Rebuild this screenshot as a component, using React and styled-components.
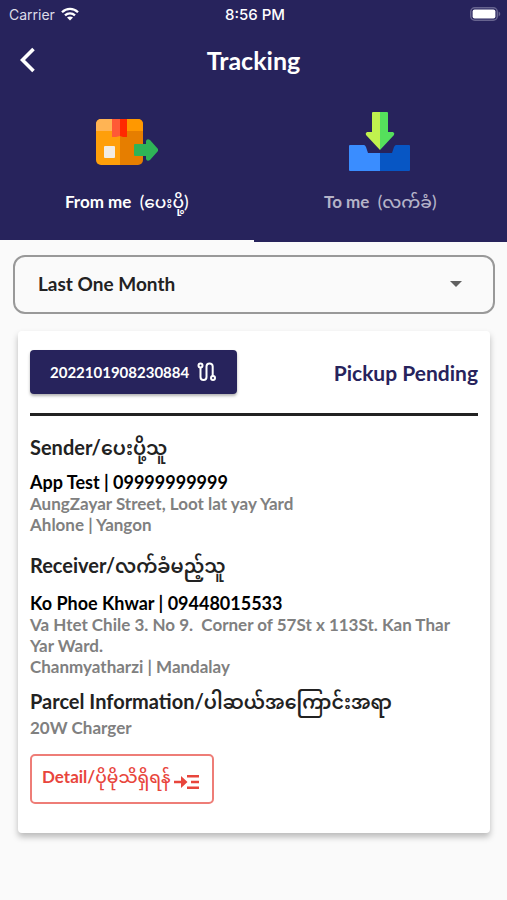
import React, { useState } from 'react'
import styled, { createGlobalStyle } from 'styled-components'

const navy = '#27235c'
const red = '#e8453c'

const GlobalStyle = createGlobalStyle`
    *{
        box-sizing:border-box;
    }
    body{
        margin:0;
        background:#fafafa;
        color:#222;
        font-family:Lato, "Noto Sans Myanmar", "Noto Sans", sans-serif;
    }
    button, select{
        font-family:inherit;
    }
`

const WifiIcon = () => (
    <svg width="18" height="14" viewBox="0 0 18 14" fill="none" stroke="#fff" strokeWidth="2.3">
        <path d="M1 5.2C5.6 0.7 12.4 0.7 17 5.2" />
        <path d="M4 8.4C6.9 5.6 11.1 5.6 14 8.4" />
        <path d="M9 13.6L6 10.6C7.7 9 10.3 9 12 10.6Z" fill="#fff" stroke="none" />
    </svg>
)

const BatteryIcon = () => (
    <svg width="31" height="14" viewBox="0 0 31 14">
        <rect x="0.75" y="0.75" width="26.5" height="12.5" rx="4" fill="none" stroke="#67648f" strokeWidth="1.5" />
        <rect x="2.6" y="2.6" width="22.8" height="8.8" rx="2" fill="#fff" />
        <path d="M28.6 4.6C30.8 5.4 30.8 8.6 28.6 9.4Z" fill="#67648f" />
    </svg>
)

const BackIcon = () => (
    <svg width="16" height="26" viewBox="0 0 16 26" fill="none" stroke="#fff" strokeWidth="3.6">
        <path d="M13.5 2L2.5 13L13.5 24" />
    </svg>
)

const ParcelOutIcon = () => (
    <svg width="62" height="64" viewBox="0 0 62 64">
        <path d="M5 7h19v46H5a5 5 0 0 1-5-5V12a5 5 0 0 1 5-5z" fill="#ff9f0a" />
        <path d="M24 7h18a5 5 0 0 1 5 5v36a5 5 0 0 1-5 5H24z" fill="#e67e00" />
        <path d="M5 7h11v12H0v-7a5 5 0 0 1 5-5z" fill="#ffb454" />
        <path d="M31 7h11a5 5 0 0 1 5 5v7H31z" fill="#ff9800" />
        <path d="M16 7h8v17l-4 1h-4z" fill="#ff5a36" />
        <path d="M24 7h7v18h-4l-3-1z" fill="#ff2a00" />
        <rect x="8" y="34" width="11" height="12" rx="1" fill="#f2ece3" />
        <path d="M39 32h11v-3q1-3 4-1l8 9q1 1 0 2l-8 9q-3 2-4-1v-3H39q-1 0-1-1V33q0-1 1-1z" fill="#2fb457" />
    </svg>
)

const InboxIcon = () => (
    <svg width="62" height="64" viewBox="1 0 62 64">
        <path d="M2 33h14q1 0 2 2l2 6h12v18H2q-1 0-1-1V34q0-1 1-1z" fill="#3a8dff" />
        <path d="M32 41h12l2-6q1-2 2-2h13q1 0 1 1v24q0 1-1 1H32z" fill="#0756c4" />
        <path d="M32 0h-7q-1 0-1 1v19h-5q-2 1-1 3l14 15z" fill="#c0f24e" />
        <path d="M32 0h7q1 0 1 1v19h5q2 1 1 3L32 38z" fill="#55e05c" />
    </svg>
)

const RouteIcon = () => (
    <svg width="20" height="20" viewBox="0 0 20 20" fill="none" stroke="#fff" strokeWidth="2">
        <circle cx="3.5" cy="3.5" r="2" />
        <path d="M3.5 5.5V15a3 3 0 0 0 6 0V4.5a3.1 3.1 0 0 1 6.2 0V14" />
        <circle cx="16" cy="16" r="2" />
    </svg>
)

const ReadMoreIcon = () => (
    <ReadMoreSvg width="26" height="16" viewBox="0 0 26 16" fill={red}>
        <path d="M0 6.8h7V2L13.5 8L7 14V9.2H0z" />
        <path d="M13 1h12v2.5H13zM17 6.8h8v2.4h-8zM13 12.5h12V15H13z" />
    </ReadMoreSvg>
)

const Track = () => {
    const [tab, setTab] = useState('from')
    return(
        <div>
            <GlobalStyle />
            <Header>
                <StatusBar>
                    <Carrier>Carrier <WifiIcon /></Carrier>
                    <Clock>8:56 PM</Clock>
                    <Battery><BatteryIcon /></Battery>
                </StatusBar>
                <TitleBar>
                    <BackButton type="button" aria-label="Back"><BackIcon /></BackButton>
                    <Title>Tracking</Title>
                </TitleBar>
                <Tabs role="tablist">
                    <Tab type="button" role="tab" aria-selected={tab === 'from'} $active={tab === 'from'} onClick={() => setTab('from')}>
                        <ParcelOutIcon />
                        <TabLabel $active={tab === 'from'}>From me&nbsp; <Light>(ပေးပို့)</Light></TabLabel>
                    </Tab>
                    <Tab type="button" role="tab" aria-selected={tab === 'to'} $active={tab === 'to'} onClick={() => setTab('to')}>
                        <InboxIcon />
                        <TabLabel $active={tab === 'to'}>To me&nbsp; <Light>(လက်ခံ)</Light></TabLabel>
                    </Tab>
                </Tabs>
            </Header>
            <Content>
                <Period>
                    <PeriodSelect aria-label="Period" defaultValue="month">
                        <option value="month">Last One Month</option>
                    </PeriodSelect>
                    <Caret width="12" height="6" viewBox="0 0 12 6"><path d="M0 0h12L6 6z" fill="#616161" /></Caret>
                </Period>
                <Card>
                    <CardTop>
                        <CodeButton type="button">2022101908230884 <RouteIcon /></CodeButton>
                        <Status>Pickup Pending</Status>
                    </CardTop>
                    <Section $after={15}>
                        <Heading $gap={10}>Sender/<Burmese>ပေးပို့သူ</Burmese></Heading>
                        <Person>App Test | 09999999999</Person>
                        <Detail>AungZayar Street, Loot lat yay Yard</Detail>
                        <Detail>Ahlone | Yangon</Detail>
                    </Section>
                    <Section $after={9}>
                        <Heading $gap={13}>Receiver/<Burmese>လက်ခံမည့်သူ</Burmese></Heading>
                        <Person>Ko Phoe Khwar | 09448015533</Person>
                        <Detail>Va Htet Chile 3. No 9.&nbsp; Corner of 57St x 113St. Kan Thar Yar Ward.</Detail>
                        <Detail>Chanmyatharzi | Mandalay</Detail>
                    </Section>
                    <Section $after={16}>
                        <Heading $gap={1}>Parcel Information/<Burmese>ပါဆယ်အကြောင်းအရာ</Burmese></Heading>
                        <Detail>20W Charger</Detail>
                    </Section>
                    <DetailButton type="button"><span>Detail/<Light>ပိုမိုသိရှိရန်</Light></span> <ReadMoreIcon /></DetailButton>
                </Card>
            </Content>
        </div>
    )
}

export default Track

const Header = styled.header`
    background:${navy};
    color:#fff;
`

const StatusBar = styled.div`
    display:grid;
    grid-template-columns:1fr auto 1fr;
    align-items:center;
    height:28px;
    padding:0 6px 0 9px;
    font-family:Inter, sans-serif;
    font-size:14px;
`

const Carrier = styled.span`
    display:flex;
    align-items:center;
    gap:6px;
    color:#dddce8;
`

const Clock = styled.span`
    font-size:15px;
    font-weight:500;
`

const Battery = styled.span`
    display:flex;
    justify-content:flex-end;
`

const TitleBar = styled.div`
    display:grid;
    grid-template-columns:48px 1fr 48px;
    align-items:center;
    height:64px;
`

const BackButton = styled.button`
    display:flex;
    padding:8px 0 8px 20px;
    background:transparent;
    border:none;
    cursor:pointer;
`

const Title = styled.h1`
    margin:0;
    text-align:center;
    font-size:25px;
    line-height:32px;
    font-weight:700;
`

const Tabs = styled.div`
    display:grid;
    grid-template-columns:1fr 1fr;
`

const Tab = styled.button`
    display:flex;
    flex-direction:column;
    align-items:center;
    gap:12px;
    height:150px;
    padding:20px 0 0;
    background:transparent;
    border:none;
    border-bottom:2px solid ${props => props.$active ? '#fafafa' : navy};
    cursor:pointer;
`

const TabLabel = styled.span`
    color:${props => props.$active ? '#fff' : '#b5b3c8'};
    font-size:17px;
    line-height:28px;
    font-weight:700;
    white-space:nowrap;
`

const Light = styled.span`
    font-weight:500;
`

const Burmese = styled.span`
    font-size:19px;
    line-height:1;
    font-weight:600;
`

const Content = styled.main`
    padding:13px 12px 24px 13px;
`

const Period = styled.div`
    position:relative;
    margin-bottom:17px;
`

const PeriodSelect = styled.select`
    display:block;
    width:100%;
    height:59px;
    padding:0 23px 2px;
    appearance:none;
    background:transparent;
    border:2px solid #999;
    border-radius:12px;
    color:#222;
    font-size:19px;
    font-weight:700;
`

const Caret = styled.svg`
    position:absolute;
    top:50%;
    right:33px;
    margin-top:-4px;
    pointer-events:none;
`

const Card = styled.article`
    margin:0 5px;
    padding:19px 12px 29px;
    background:#fff;
    border-radius:4px;
    box-shadow:0 4px 6px rgba(0,0,0,.26);
`

const CardTop = styled.div`
    display:flex;
    align-items:center;
    justify-content:space-between;
    padding-bottom:19px;
    border-bottom:3px solid #222;
    margin-bottom:16px;
`

const CodeButton = styled.button`
    display:flex;
    align-items:center;
    gap:8px;
    height:44px;
    padding:0 20px;
    background:${navy};
    border:none;
    border-radius:4px;
    box-shadow:0 2px 3px rgba(0,0,0,.3);
    color:#fff;
    font-size:15px;
    font-weight:700;
    cursor:pointer;
`

const Status = styled.span`
    color:${navy};
    font-size:21px;
    font-weight:700;
`

const Section = styled.section`
    margin-bottom:${props => props.$after}px;
`

const Heading = styled.h2`
    margin:0 0 ${props => props.$gap}px;
    font-size:20px;
    line-height:30px;
    font-weight:700;
    white-space:nowrap;
`

const Person = styled.p`
    margin:0;
    color:#000;
    font-size:18px;
    line-height:21px;
    font-weight:700;
`

const Detail = styled.p`
    margin:0;
    padding-right:12px;
    color:#808080;
    font-size:17px;
    line-height:21px;
    font-weight:700;
`

const ReadMoreSvg = styled.svg`
    margin-top:6px;
`

const DetailButton = styled.button`
    display:flex;
    align-items:center;
    gap:3px;
    height:50px;
    padding:0 12px 0 10px;
    background:transparent;
    border:2px solid #ee7d77;
    border-radius:5px;
    color:${red};
    font-size:17px;
    font-weight:700;
    white-space:nowrap;
    cursor:pointer;
`
